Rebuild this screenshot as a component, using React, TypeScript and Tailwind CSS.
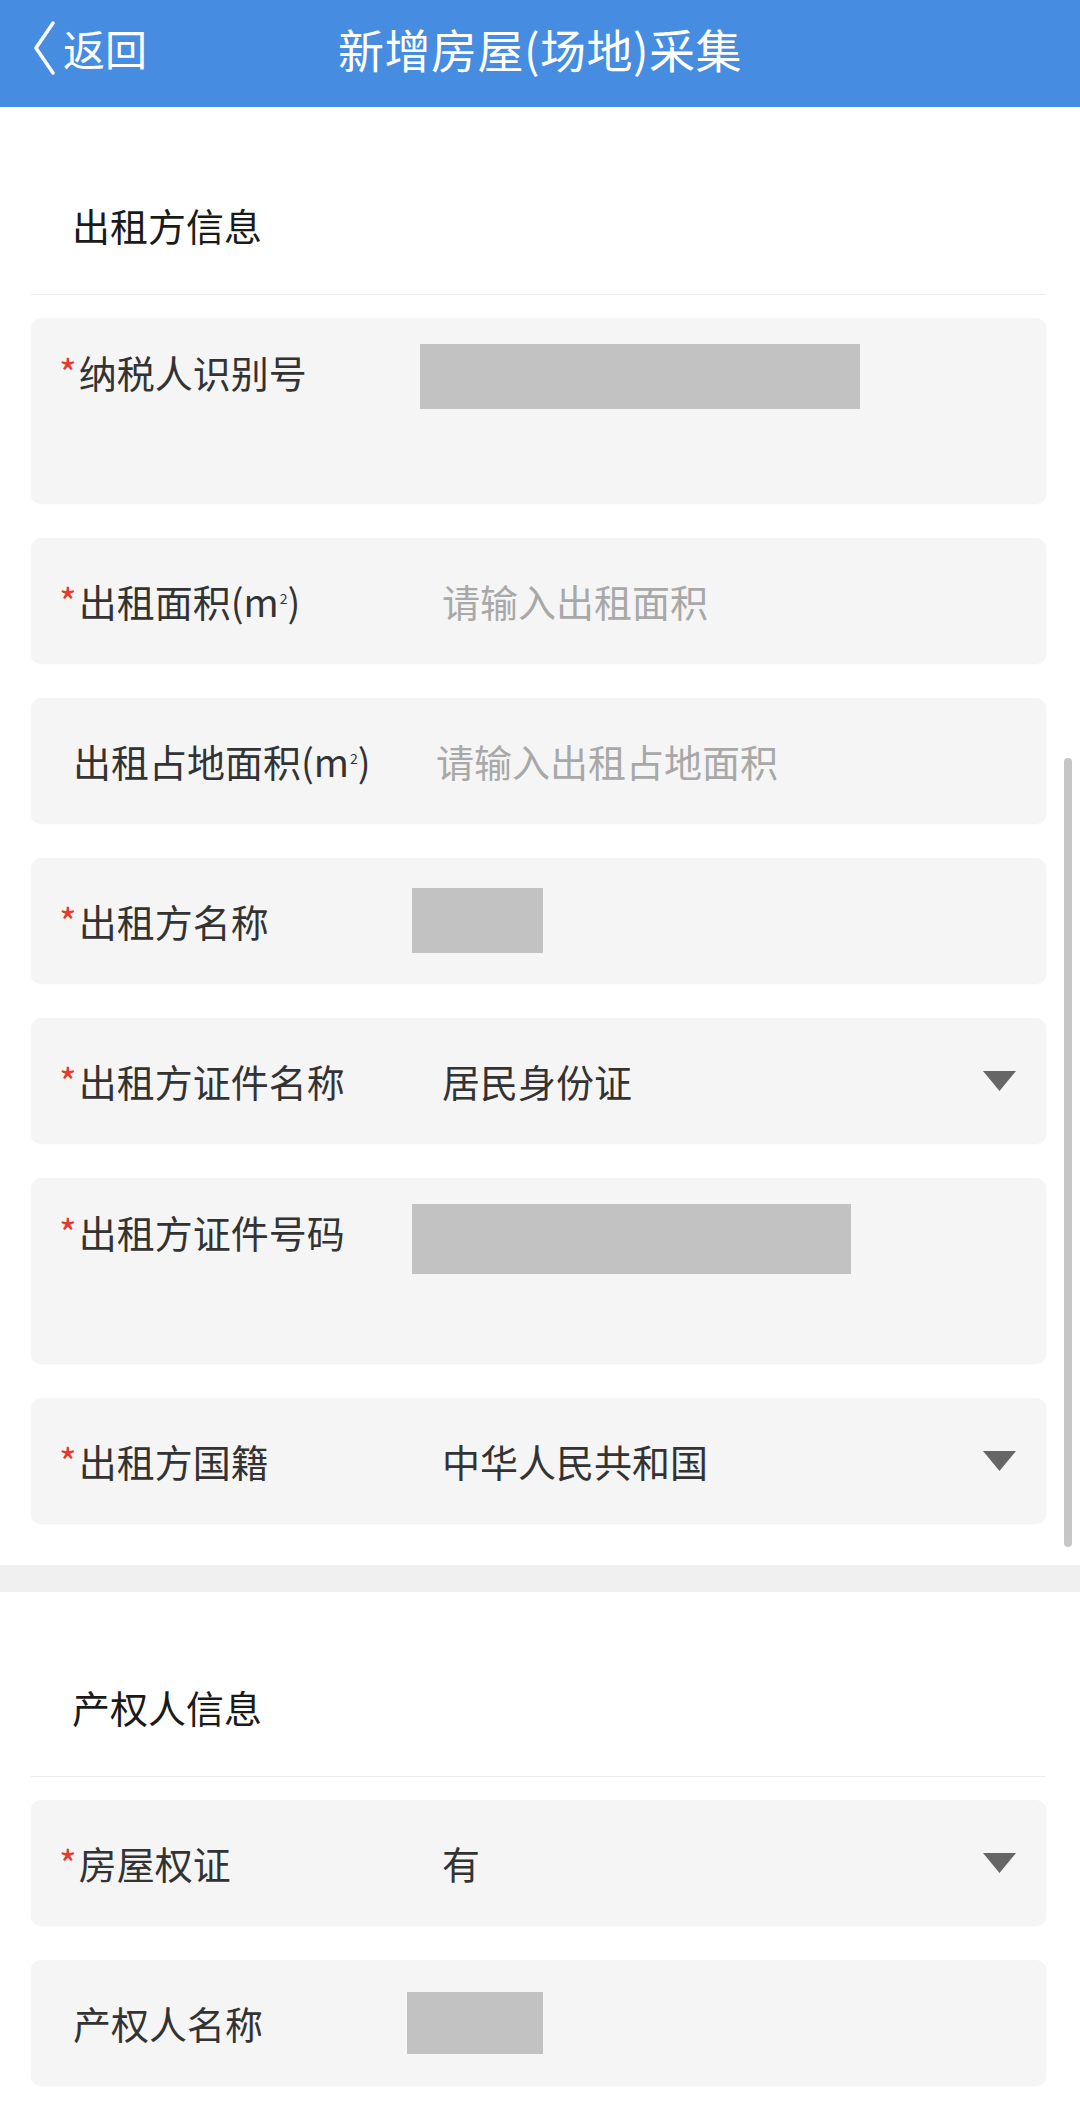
import type { ReactNode } from 'react'

const FONT = { fontFamily: '"Noto Sans CJK SC", "Noto Sans", sans-serif' }

type Field = {
  label: ReactNode
  required?: boolean
  tall?: boolean
  value?: string
  placeholder?: string
  valueOffset?: string
  box?: { w: string; h: string; ml: string }
  select?: boolean
}

const m2 = (
  <>
    (m<span className="relative -top-[13px] ml-[1px] text-[14px] leading-none">2</span>)
  </>
)

const lessorFields: Field[] = [
  { label: '纳税人识别号', required: true, tall: true, box: { w: 'w-[440px]', h: 'h-[65px]', ml: 'ml-[8px]' } },
  { label: <>出租面积{m2}</>, required: true, placeholder: '请输入出租面积' },
  { label: <>出租占地面积{m2}</>, placeholder: '请输入出租占地面积', valueOffset: 'ml-[24px]' },
  { label: '出租方名称', required: true, box: { w: 'w-[131px]', h: 'h-[65px]', ml: 'ml-0' } },
  { label: '出租方证件名称', required: true, value: '居民身份证', select: true },
  { label: '出租方证件号码', required: true, tall: true, box: { w: 'w-[439px]', h: 'h-[70px]', ml: 'ml-0' } },
  { label: '出租方国籍', required: true, value: '中华人民共和国', select: true },
]

const ownerFields: Field[] = [
  { label: '房屋权证', required: true, value: '有', select: true },
  { label: '产权人名称', box: { w: 'w-[136px]', h: 'h-[62px]', ml: 'ml-[-5px]' } },
  { label: '' },
]

function Caret() {
  return (
    <svg width="33" height="20" viewBox="0 0 33 20" className="shrink-0">
      <polygon points="0,0 33,0 16.5,20" fill="#666666" />
    </svg>
  )
}

function FieldCard({ f }: { f: Field }) {
  return (
    <div
      className={`ml-[31px] mr-[34px] mt-[35px] flex rounded-[10px] bg-[#f5f5f5] pl-[28px] pr-[30px] shadow-[0_1px_2px_rgba(0,0,0,0.06)] first:mt-[23px] ${
        f.tall ? 'h-[185px] items-start pt-[26px]' : 'h-[125px] items-center'
      }`}
    >
      <div
        className={`flex w-[353px] shrink-0 items-center text-[38px] leading-[52px] text-[#333] ${
          f.tall ? 'mt-[2px]' : ''
        } ${f.required ? '' : 'pl-[14px]'}`}
      >
        {f.required && <span className="mr-[2px] text-[#e23a2e]">*</span>}
        <span className="whitespace-nowrap">{f.label}</span>
      </div>
      <div className="flex flex-1 items-center">
        {f.box && <div className={`${f.box.w} ${f.box.h} ${f.box.ml} bg-[#c2c2c2]`} />}
        {f.placeholder && (
          <span className={`${f.valueOffset ?? 'ml-[30px]'} text-[38px] leading-[52px] text-[#a8a8a8]`}>
            {f.placeholder}
          </span>
        )}
        {f.value && (
          <span className="ml-[30px] text-[38px] leading-[52px] text-[#333]">{f.value}</span>
        )}
      </div>
      {f.select && <Caret />}
    </div>
  )
}

function SectionTitle({ children, pt }: { children: string; pt: string }) {
  return (
    <>
      <div className={`${pt} pb-[43px] pl-[72px] text-[38px] leading-[52px] text-[#1a1a1a]`}>{children}</div>
      <div className="ml-[31px] mr-[34px] h-px bg-[#ececec]" />
    </>
  )
}

export default function App() {
  return (
    <div className="relative h-[2118px] w-[1080px] overflow-hidden bg-white" style={FONT}>
      <header className="h-[107px] bg-[#468ce1] text-white">
        <div className="grid h-[95px] grid-cols-[1fr_auto_1fr] items-center">
          <div className="flex items-center pl-[33px]">
            <svg width="22" height="54" viewBox="0 0 22 54" className="mr-[8px]">
              <polyline points="20,2 3,27 20,52" fill="none" stroke="white" strokeWidth="3.5" strokeLinecap="round" strokeLinejoin="round" />
            </svg>
            <span className="text-[42px] leading-none">返回</span>
          </div>
          <h1 className="text-[46px] leading-none tracking-[0.5px]">新增房屋(场地)采集</h1>
          <div />
        </div>
      </header>

      <section className="pb-[42px]">
        <SectionTitle pt="pt-[92px]">出租方信息</SectionTitle>
        <div>
          {lessorFields.map((f, i) => (
            <FieldCard key={i} f={f} />
          ))}
        </div>
      </section>

      <div className="h-[27px] bg-[#f0f0f0]" />

      <section>
        <SectionTitle pt="pt-[89px]">产权人信息</SectionTitle>
        <div>
          {ownerFields.map((f, i) => (
            <FieldCard key={i} f={f} />
          ))}
        </div>
      </section>

      {/* overlay scrollbar */}
      <div className="absolute right-[8px] top-[758px] h-[789px] w-[8px] rounded-full bg-[#c6c6c6]" />
    </div>
  )
}
